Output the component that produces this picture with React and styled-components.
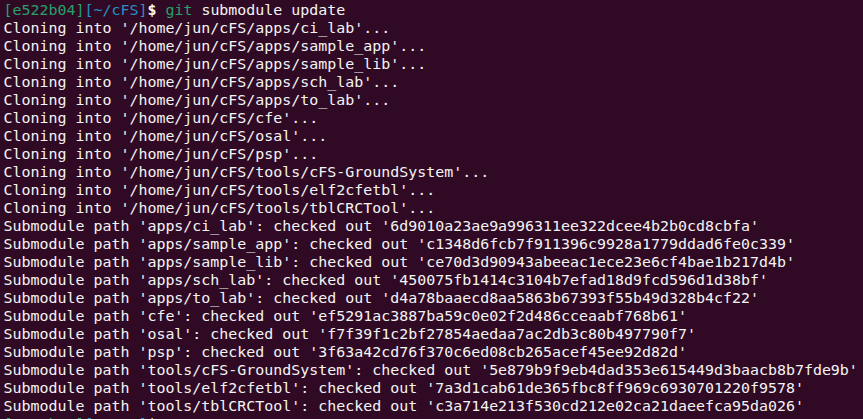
import React from "react";
import styled, { createGlobalStyle } from "styled-components";

const Global = createGlobalStyle`
  html, body {
    margin: 0;
    padding: 0;
    background: #300a24;
  }
`;

const Terminal = styled.div`
  width: 863px;
  height: 419px;
  overflow: hidden;
  box-sizing: border-box;
  padding: 1px 0 0 3.5px;
  background: #300a24;
  color: #f4f4f4;
  font-family: "DejaVu Sans Mono", "Liberation Mono", monospace;
  font-size: 14.95px;
  line-height: 18px;
  white-space: pre;
`;

const Line = styled.div`
  height: 18px;
`;

const Seg = styled.span`
  color: ${(p) => p.$c || "inherit"};
  font-weight: ${(p) => (p.$bold ? 700 : 400)};
`;

const GREEN = "#26a269";
const BLUE = "#2a8fc6";

const Prompt = ({ cmd }) => (
  <Line>
    <Seg $c={GREEN}>[e522b04]</Seg>
    <Seg $c={BLUE}>[~/cFS]</Seg>
    <Seg $c="#ffffff" $bold>$</Seg>
    {cmd ? (
      <>
        {" "}
        <Seg $c={GREEN}>git</Seg>
        {" submodule update"}
      </>
    ) : (
      " "
    )}
  </Line>
);

const clones = [
  "apps/ci_lab",
  "apps/sample_app",
  "apps/sample_lib",
  "apps/sch_lab",
  "apps/to_lab",
  "cfe",
  "osal",
  "psp",
  "tools/cFS-GroundSystem",
  "tools/elf2cfetbl",
  "tools/tblCRCTool",
];

const checkouts = [
  ["apps/ci_lab", "6d9010a23ae9a996311ee322dcee4b2b0cd8cbfa"],
  ["apps/sample_app", "c1348d6fcb7f911396c9928a1779ddad6fe0c339"],
  ["apps/sample_lib", "ce70d3d90943abeeac1ece23e6cf4bae1b217d4b"],
  ["apps/sch_lab", "450075fb1414c3104b7efad18d9fcd596d1d38bf"],
  ["apps/to_lab", "d4a78baaecd8aa5863b67393f55b49d328b4cf22"],
  ["cfe", "ef5291ac3887ba59c0e02f2d486cceaabf768b61"],
  ["osal", "f7f39f1c2bf27854aedaa7ac2db3c80b497790f7"],
  ["psp", "3f63a42cd76f370c6ed08cb265acef45ee92d82d"],
  ["tools/cFS-GroundSystem", "5e879b9f9eb4dad353e615449d3baacb8b7fde9b"],
  ["tools/elf2cfetbl", "7a3d1cab61de365fbc8ff969c6930701220f9578"],
  ["tools/tblCRCTool", "c3a714e213f530cd212e02ca21daeefca95da026"],
];

export default function App() {
  return (
    <>
      <Global />
      <Terminal>
        <Prompt cmd />
        {clones.map((c) => (
          <Line key={c}>{`Cloning into '/home/jun/cFS/${c}'...`}</Line>
        ))}
        {checkouts.map(([p, h]) => (
          <Line key={p}>{`Submodule path '${p}': checked out '${h}'`}</Line>
        ))}
        <Prompt />
      </Terminal>
    </>
  );
}
